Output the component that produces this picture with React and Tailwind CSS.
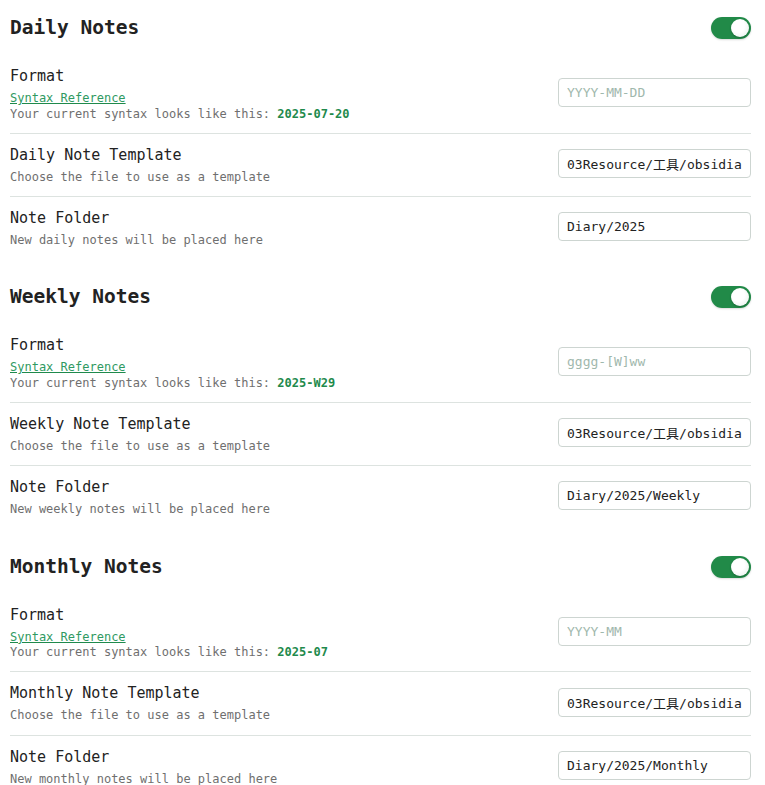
import React from "react";

const mono = { fontFamily: '"DejaVu Sans Mono", "Noto Sans CJK SC", monospace' };

function Toggle() {
  return (
    <div className="relative w-[40px] h-[22px] rounded-full bg-[#218a48] shadow-[0_1px_2px_rgba(0,0,0,0.15)]">
      <div className="absolute right-[2px] top-[2px] w-[18px] h-[18px] rounded-full bg-[radial-gradient(circle_at_40%_40%,#ffffff_40%,#e6ece9_100%)] shadow-[0_1px_2px_rgba(0,0,0,0.25)]" />
    </div>
  );
}

function Input({ value, placeholder }) {
  return (
    <input
      readOnly
      value={value || ""}
      placeholder={placeholder}
      style={mono}
      className="w-[193px] h-[29px] shrink-0 rounded-[4px] border border-[#cdd5d1] bg-white px-[8px] text-[13px] text-[#222] placeholder:text-[#9fb8ad] outline-none"
    />
  );
}

function Item({ name, children, input, border }) {
  return (
    <div className={"flex items-center justify-between pt-[11px] pb-[10.5px] " + (border ? "border-t border-[#dde3e0]" : "")}>
      <div className="flex flex-col">
        <div className="text-[15px] leading-[20px] text-[#222]">{name}</div>
        <div className="pt-[5px] text-[12px] leading-[15.6px] text-[#6f6f6f]">{children}</div>
      </div>
      <div className="-mt-[3px]">{input}</div>
    </div>
  );
}

function Section({ title, example, placeholder, kind, folder, first }) {
  return (
    <div className={first ? "" : "mt-[11px]"}>
      <div className={(first ? "h-[55px] pt-[1px]" : "h-[54.5px]") + " flex items-center justify-between"}>
        <div className="text-[19.5px] leading-[24px] font-bold text-[#222]">{title}</div>
        <Toggle />
      </div>
      <Item
        name="Format"
        input={<Input placeholder={placeholder} />}
      >
        <div>
          <span className="text-[#2f9a62] underline decoration-[#1f8a4c]">Syntax Reference</span>
        </div>
        <div>
          Your current syntax looks like this: <b className="text-[#1f8a4c] font-bold">{example}</b>
        </div>
      </Item>
      <Item
        border
        name={`${kind} Note Template`}
        input={<Input value="03Resource/工具/obsidian/templates" />}
      >
        Choose the file to use as a template
      </Item>
      <Item border name="Note Folder" input={<Input value={folder} />}>
        {`New ${kind.toLowerCase()} notes will be placed here`}
      </Item>
    </div>
  );
}

export default function App() {
  return (
    <div className="bg-white w-[765px] h-[785px] overflow-hidden pl-[10px] pr-[14px]" style={mono}>
      <Section first title="Daily Notes" kind="Daily" example="2025-07-20" placeholder="YYYY-MM-DD" folder="Diary/2025" />
      <Section title="Weekly Notes" kind="Weekly" example="2025-W29" placeholder="gggg-[W]ww" folder="Diary/2025/Weekly" />
      <Section title="Monthly Notes" kind="Monthly" example="2025-07" placeholder="YYYY-MM" folder="Diary/2025/Monthly" />
    </div>
  );
}
